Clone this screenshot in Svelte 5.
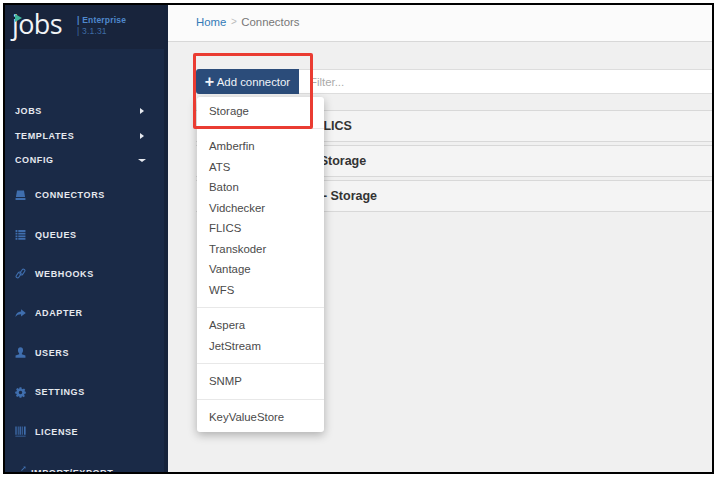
<script>
  const topItems = [
    { label: "Jobs", open: false },
    { label: "Templates", open: false },
    { label: "Config", open: true },
  ];
  const navItems = [
    { label: "Connectors", icon: "hdd" },
    { label: "Queues", icon: "list" },
    { label: "Webhooks", icon: "link" },
    { label: "Adapter", icon: "share" },
    { label: "Users", icon: "user" },
    { label: "Settings", icon: "cog" },
    { label: "License", icon: "barcode" },
  ];
  const menuGroups = [
    ["Storage"],
    ["Amberfin", "ATS", "Baton", "Vidchecker", "FLICS", "Transkoder", "Vantage", "WFS"],
    ["Aspera", "JetStream"],
    ["SNMP"],
    ["KeyValueStore"],
  ];
  const rows = ["Telestream Team FLICS", "Local Disk Folder Storage", "Corporate Volume - Storage"];
</script>

<div class="page">
  <div class="frame">
    <aside class="sidebar">
      <div class="brand">
        <div class="logo">
          <span class="wordmark">jobs</span>
          <svg class="tick" viewBox="0 0 7 8" width="7" height="8"><path d="M0 0 L7 4 L0 8 Z" fill="#3fb59b" /></svg>
        </div>
        <div class="edition">
          <span class="ent">| Enterprise</span>
          <span class="ver">| 3.1.31</span>
        </div>
      </div>
      <nav class="nav">
        {#each topItems as item}
          <div class="top-item">
            <span>{item.label}</span>
            <i class={item.open ? "caret-down" : "caret-right"}></i>
          </div>
        {/each}
        <div class="icon-items">
          {#each navItems as item}
            <div class="nav-item">
              <svg class="nav-icon" viewBox="0 0 12 12" fill="#3f6eae">
                {#if item.icon === "hdd"}
                  <path d="M2.2 .6 H9.8 L11 7.6 H1 Z M.6 8.6 H11.4 V11 H.6 Z" />
                {:else if item.icon === "list"}
                  <path d="M.6 1.2 H2.6 V3.2 H.6 Z M3.6 1.2 H11.4 V3.2 H3.6 Z M.6 4.1 H2.6 V6.1 H.6 Z M3.6 4.1 H11.4 V6.1 H3.6 Z M.6 7 H2.6 V9 H.6 Z M3.6 7 H11.4 V9 H3.6 Z M.6 9.9 H2.6 V11.6 H.6 Z M3.6 9.9 H11.4 V11.6 H3.6 Z" />
                {:else if item.icon === "link"}
                  <g fill="none" stroke="#3f6eae" stroke-width="1.2" transform="rotate(-55 6 6)">
                    <rect x="0" y="3.6" width="7" height="3.2" rx="1.6" />
                    <rect x="5" y="5.2" width="7" height="3.2" rx="1.6" />
                  </g>
                {:else if item.icon === "share"}
                  <path d="M6.6 1.4 L11.8 5.4 L6.6 9.2 V6.9 C4.2 6.8 2.2 7.6 .4 9.8 C.8 6.2 3.2 4 6.6 3.8 Z" />
                {:else if item.icon === "user"}
                  <path d="M6 .4 C7.8 .4 8.8 1.8 8.8 3.6 C8.8 5 8.2 6.2 7.5 6.8 V7.8 L11.4 9.4 V11.6 H.6 V9.4 L4.5 7.8 V6.8 C3.8 6.2 3.2 5 3.2 3.6 C3.2 1.8 4.2 .4 6 .4 Z" />
                {:else if item.icon === "cog"}
                  <path fill-rule="evenodd" d="M5 .4 H7 L7.3 2 L8.5 2.5 L9.8 1.6 L11.2 3 L10.3 4.3 L10.8 5 L11.8 5.2 V7 L10.4 7.3 L9.9 8.5 L10.8 9.7 L9.4 11.1 L8.1 10.2 L7.2 10.5 L7 11.8 H5 L4.7 10.4 L3.6 10 L2.4 11 L1 9.6 L1.9 8.4 L1.5 7.3 L.2 7 V5.1 L1.6 4.8 L2.1 3.7 L1.2 2.4 L2.6 1 L3.8 1.9 L4.7 1.6 Z M6 4.2 A1.9 1.9 0 1 0 6 8 A1.9 1.9 0 1 0 6 4.2 Z" />
                {:else}
                  <path d="M.4 .6 H1.8 V9.6 H.4 Z M3 .6 H4 V9.6 H3 Z M5 .6 H6.4 V9.6 H5 Z M7.4 .6 H8.4 V9.6 H7.4 Z M9.8 .6 H11.6 V9.6 H9.8 Z M.4 10.6 H11.6 V11.4 H.4 Z" />
                {/if}
              </svg>
              <span>{item.label}</span>
            </div>
          {/each}
          <div class="nav-item last">
            <svg class="nav-icon small" viewBox="0 0 12 12" fill="#3f6eae">
              <path d="M6.5 1 H11 V5.5 L9.4 3.9 L3.5 9.8 L2.2 8.5 L8.1 2.6 Z" />
            </svg>
            <span>Import/Export</span>
          </div>
        </div>
      </nav>
    </aside>

    <main class="main">
      <header class="crumbs">
        <a href="#home">Home</a>
        <span class="sep">&gt;</span>
        <span>Connectors</span>
      </header>
      <div class="content">
        <div class="toolbar">
          <button class="add"><b>+</b> Add connector</button>
          <input class="filter" placeholder="Filter..." />
        </div>
        <div class="rows">
          {#each rows as row}
            <div class="row">{row}</div>
          {/each}
        </div>
      </div>
    </main>

    <div class="menu">
      {#each menuGroups as group, i}
        {#if i > 0}<div class="divider"></div>{/if}
        {#each group as name}
          <div class="menu-item">{name}</div>
        {/each}
      {/each}
    </div>
    <div class="callout"></div>
  </div>
</div>

<style>
  :global(body) {
    margin: 0;
    background: #fff;
  }
  .page {
    width: 724px;
    height: 482px;
    padding: 3px 0 0 3px;
    box-sizing: border-box;
    overflow: hidden;
    font-family: "Liberation Sans", Arial, sans-serif;
  }
  .frame {
    position: relative;
    width: 711px;
    height: 471px;
    box-sizing: border-box;
    border: 2px solid #000;
    display: flex;
    overflow: hidden;
    background: #f0f0f0;
  }
  .sidebar {
    width: 163px;
    flex: none;
    box-sizing: border-box;
    background: #1a2a47;
    border-right: 4px solid #16233b;
    overflow: hidden;
    color: #e6e9ef;
  }
  .brand {
    height: 44px;
    background: #18243c;
    display: flex;
  }
  .logo {
    position: relative;
    width: 67px;
    padding-left: 7px;
    flex: none;
    box-sizing: border-box;
  }
  .wordmark {
    font-family: "Open Sans", sans-serif;
    font-size: 27px;
    line-height: 37px;
    letter-spacing: -0.6px;
    color: #f2f4f6;
    display: block;
  }
  .tick {
    position: absolute;
    left: 10px;
    top: 9px;
  }
  .edition {
    padding-top: 10px;
    font-size: 8.5px;
    line-height: 11px;
    display: flex;
    flex-direction: column;
    letter-spacing: 0.2px;
    padding-left: 5px;
  }
  .ent {
    color: #4f88cc;
    font-weight: bold;
  }
  .ver {
    color: #3f6ca6;
  }
  .nav {
    padding-top: 50px;
    font-size: 9px;
    font-weight: bold;
    letter-spacing: 0.6px;
    text-transform: uppercase;
  }
  .top-item {
    height: 24.5px;
    padding: 0 20px 0 10px;
    display: flex;
    align-items: center;
    justify-content: space-between;
  }
  .caret-right {
    border-left: 4px solid #e6e9ef;
    border-top: 3px solid transparent;
    border-bottom: 3px solid transparent;
  }
  .caret-down {
    border-top: 3px solid #e6e9ef;
    border-left: 4px solid transparent;
    border-right: 4px solid transparent;
    margin-right: -2px;
  }
  .icon-items {
    padding-top: 3px;
  }
  .nav-item {
    height: 39.4px;
    padding-left: 10px;
    display: flex;
    align-items: center;
    gap: 9px;
  }
  .nav-item.last {
    padding: 2px 0 0 15px;
    gap: 0;
  }
  .nav-icon {
    flex: none;
    width: 11px;
    height: 11px;
  }
  .nav-icon.small {
    width: 6px;
    height: 6px;
    margin: -8px 5px 0 0;
  }
  .main {
    flex: 1;
    min-width: 0;
    display: flex;
    flex-direction: column;
  }
  .crumbs {
    height: 37px;
    box-sizing: border-box;
    background: #fbfbfb;
    border-bottom: 1px solid #d8d8d8;
    padding: 0 0 3px 28px;
    display: flex;
    align-items: center;
    gap: 4.5px;
    font-size: 11.4px;
    color: #777;
  }
  .crumbs a {
    color: #337ab7;
    text-decoration: none;
  }
  .sep {
    color: #bbb;
    font-size: 10px;
  }
  .content {
    flex: 1;
    padding: 27px 0 0 28px;
  }
  .toolbar {
    display: flex;
    height: 25px;
  }
  .add {
    width: 103px;
    flex: none;
    border: 0;
    padding: 0;
    border-radius: 3px 0 0 3px;
    background: #2b4c7a;
    color: #f1f4f8;
    font: 11.4px "Liberation Sans", Arial, sans-serif;
  }
  .add b {
    font-size: 16px;
    line-height: 12px;
    vertical-align: -1px;
  }
  .filter {
    flex: 1;
    min-width: 0;
    box-sizing: border-box;
    border: 1px solid #ddd;
    border-left: 0;
    border-right: 0;
    background: #fff;
    padding: 0 0 0 11px;
    font: 11.4px "Liberation Sans", Arial, sans-serif;
  }
  .filter::placeholder {
    color: #aaa;
  }
  .rows {
    margin: 16px 0 0 0;
    display: flex;
    flex-direction: column;
    gap: 3px;
  }
  .row {
    height: 32px;
    box-sizing: border-box;
    background: #f4f4f4;
    border-top: 1px solid #d8d8d8;
    border-bottom: 1px solid #d8d8d8;
    padding: 0 0 1px 16px;
    display: flex;
    align-items: center;
    font-size: 12.5px;
    font-weight: bold;
    color: #333;
  }
  .menu {
    position: absolute;
    left: 192px;
    top: 92px;
    width: 127px;
    height: 335px;
    box-sizing: border-box;
    background: #fff;
    border-radius: 3px;
    padding: 3.7px 0;
    box-shadow: 0 3px 10px rgba(0, 0, 0, 0.28);
    font-size: 11.4px;
    color: #4a4a4a;
  }
  .menu-item {
    height: 20.5px;
    line-height: 20.5px;
    padding-left: 12px;
  }
  .divider {
    height: 1px;
    background: #e8e8e8;
    margin: 7px 0;
  }
  .callout {
    position: absolute;
    left: 188px;
    top: 48px;
    width: 120px;
    height: 76px;
    box-sizing: border-box;
    border: 3px solid #ea3c32;
    border-radius: 2px;
  }
</style>
